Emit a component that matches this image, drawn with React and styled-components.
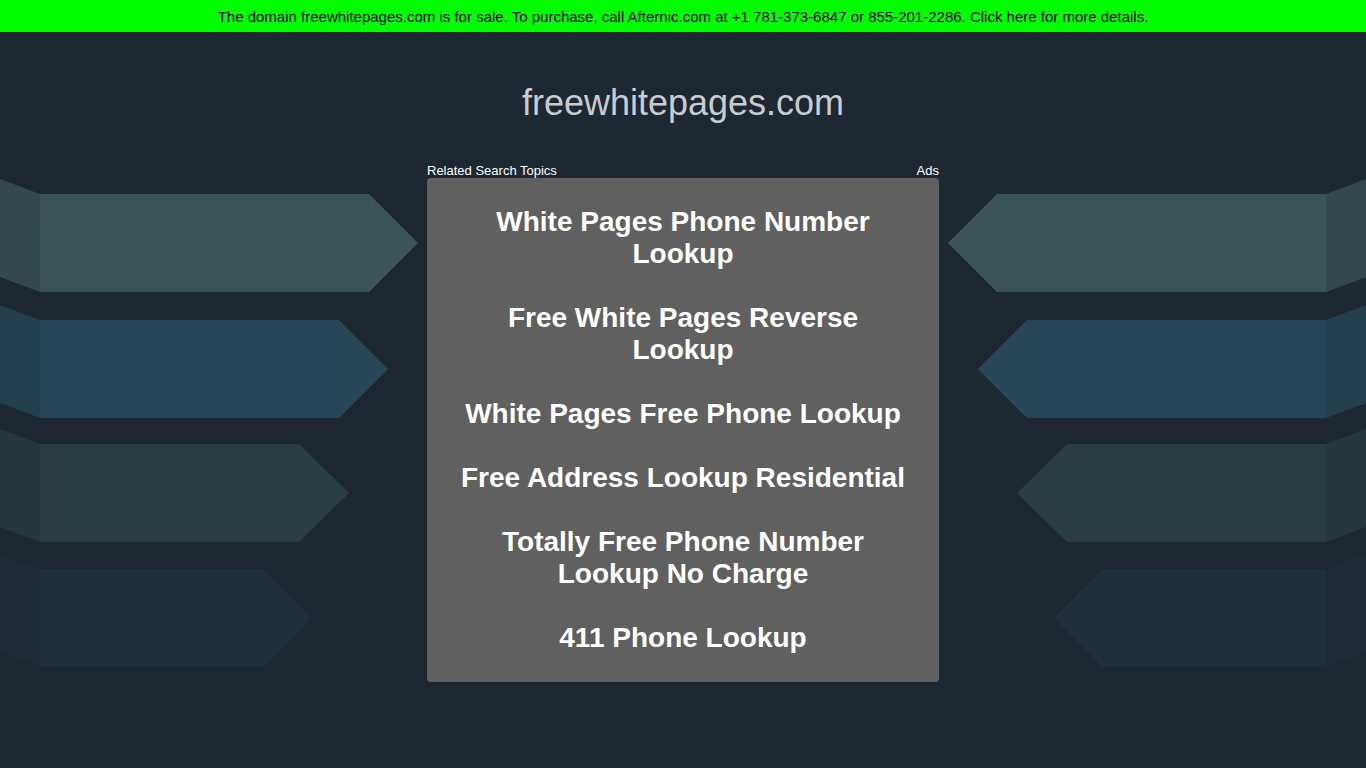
import React from "react";
import styled, { createGlobalStyle } from "styled-components";

const GlobalStyle = createGlobalStyle`
	html, body {
		margin: 0;
		padding: 0;
		background: #1d2833;
		font-family: "Liberation Sans", Arial, sans-serif;
	}
`;

const Page = styled.div`
	position: relative;
	min-height: 768px;
	overflow: hidden;
`;

const Backdrop = styled.svg`
	position: absolute;
	top: 0;
	left: 0;
	width: 1366px;
	height: 768px;
	z-index: 0;
	pointer-events: none;
`;

const SaleBar = styled.a`
	display: block;
	position: relative;
	z-index: 1;
	height: 32px;
	line-height: 34px;
	background: #00ff00;
	color: #000;
	font-size: 15px;
	text-align: center;
	text-decoration: none;
	cursor: pointer;
`;

const Main = styled.main`
	position: relative;
	z-index: 1;
	width: 512px;
	margin: 0 auto;
	display: flex;
	flex-direction: column;
`;

const DomainTitle = styled.h1`
	margin: 50px 0 0;
	font-size: 36px;
	font-weight: normal;
	line-height: 42px;
	color: #c8ccd1;
	text-align: center;
`;

const LabelRow = styled.div`
	margin-top: 39px;
	display: flex;
	justify-content: space-between;
	font-size: 13px;
	line-height: 15px;
	color: #fff;
`;

const TopicBox = styled.div`
	background: #606060;
	border-radius: 4px;
	padding: 28px 30px 28px;
	display: flex;
	flex-direction: column;
	gap: 32px;
`;

const Topic = styled.a`
	display: block;
	font-size: 28px;
	font-weight: bold;
	line-height: 32px;
	color: #fff;
	text-align: center;
	text-decoration: none;
`;

const arrows = [
	{ top: 194, end: 369, tip: 418, body: "#3a5359", head: "#3b5459", side: "#33494f" },
	{ top: 320, end: 339, tip: 388, body: "#264657", head: "#274757", side: "#24404f" },
	{ top: 444, end: 299, tip: 349, body: "#2a3d45", head: "#2b3e46", side: "#27373f" },
	{ top: 569, end: 264, tip: 312, body: "#1f2f3c", head: "#20303d", side: "#1f2c38" },
];

const topics = [
	"White Pages Phone Number Lookup",
	"Free White Pages Reverse Lookup",
	"White Pages Free Phone Lookup",
	"Free Address Lookup Residential",
	"Totally Free Phone Number Lookup No Charge",
	"411 Phone Lookup",
];

function ArrowSet() {
	return arrows.map((a) => {
		const b = a.top + 98;
		const m = a.top + 49;
		return (
			<g key={a.top}>
				<polygon points={`0,${a.top - 15} 40,${a.top} 40,${b} 0,${b - 15}`} fill={a.side} />
				<rect x="40" y={a.top} width={a.end - 40} height="98" fill={a.body} />
				<polygon points={`${a.end},${a.top} ${a.tip},${m} ${a.end},${b}`} fill={a.head} />
			</g>
		);
	});
}

export default function App() {
	return (
		<Page>
			<GlobalStyle />
			<Backdrop viewBox="0 0 1366 768">
				<ArrowSet />
				<g transform="translate(1366,0) scale(-1,1)">
					<ArrowSet />
				</g>
			</Backdrop>
			<SaleBar>
				The domain freewhitepages.com is for sale. To purchase, call Afternic.com at +1 781-373-6847 or
				855-201-2286. Click here for more details.
			</SaleBar>
			<Main>
				<DomainTitle>freewhitepages.com</DomainTitle>
				<LabelRow>
					<span>Related Search Topics</span>
					<span>Ads</span>
				</LabelRow>
				<TopicBox>
					{topics.map((t) => (
						<Topic key={t}>{t}</Topic>
					))}
				</TopicBox>
			</Main>
		</Page>
	);
}
